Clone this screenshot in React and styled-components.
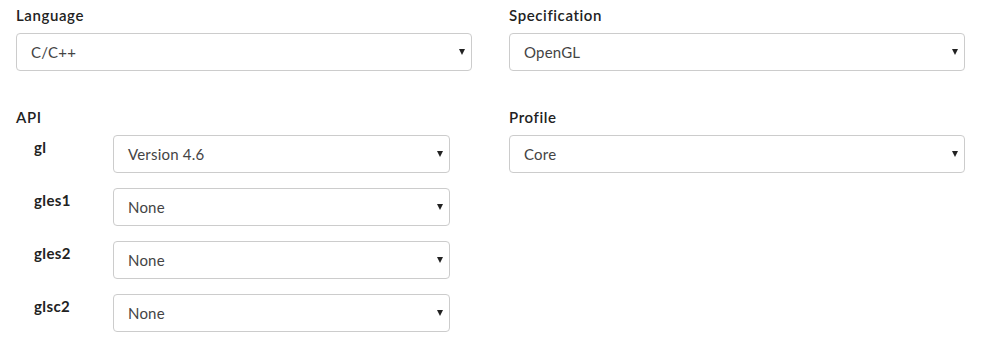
import React from 'react';
import styled, { createGlobalStyle } from 'styled-components';

const Global = createGlobalStyle`
  body {
    margin: 0;
    background: #fff;
    font-family: 'Lato', 'Open Sans', sans-serif;
    color: #333;
  }
`;

const Page = styled.div`
  display: grid;
  grid-template-columns: 456px 456px;
  column-gap: 37px;
  row-gap: 36px;
  padding: 5px 16px 0;
`;

const Field = styled.div`
  display: flex;
  flex-direction: column;
`;

const Label = styled.div`
  font-size: 15px;
  font-weight: 600;
  letter-spacing: 0.6px;
  line-height: 20px;
  color: #222;
  margin-bottom: ${({ gap }) => gap || 8}px;
`;

const Box = styled.div`
  box-sizing: border-box;
  display: flex;
  align-items: center;
  justify-content: space-between;
  height: 38px;
  width: ${({ w }) => (w ? `${w}px` : '100%')};
  padding: 0 6px 0 14px;
  border: 1px solid #ccc;
  border-radius: 4px;
  font-size: 15px;
  letter-spacing: 0.2px;
  color: #444;
  background: #fff;
`;

const Arrow = styled.span`
  width: 0;
  height: 0;
  border-left: 3.5px solid transparent;
  border-right: 3.5px solid transparent;
  border-top: 6px solid #222;
`;

const SubList = styled.div`
  display: flex;
  flex-direction: column;
  gap: 15px;
`;

const SubRow = styled.div`
  display: flex;
  align-items: flex-start;
`;

const SubLabel = styled.div`
  width: 79px;
  padding-left: 18px;
  padding-top: 2px;
  font-size: 15px;
  font-weight: 700;
  letter-spacing: 0.4px;
  line-height: 20px;
  color: #222;
`;

const Select = ({ value, w }) => (
  <Box w={w}>
    <span>{value}</span>
    <Arrow />
  </Box>
);

const apis = [
  ['gl', 'Version 4.6'],
  ['gles1', 'None'],
  ['gles2', 'None'],
  ['glsc2', 'None'],
];

export default function App() {
  return (
    <>
      <Global />
      <Page>
        <Field>
          <Label>Language</Label>
          <Select value="C/C++" />
        </Field>
        <Field>
          <Label>Specification</Label>
          <Select value="OpenGL" />
        </Field>
        <Field>
          <Label>API</Label>
          <SubList>
            {apis.map(([name, val]) => (
              <SubRow key={name}>
                <SubLabel>{name}</SubLabel>
                <Select value={val} w={337} />
              </SubRow>
            ))}
          </SubList>
        </Field>
        <Field>
          <Label>Profile</Label>
          <Select value="Core" />
        </Field>
      </Page>
    </>
  );
}
